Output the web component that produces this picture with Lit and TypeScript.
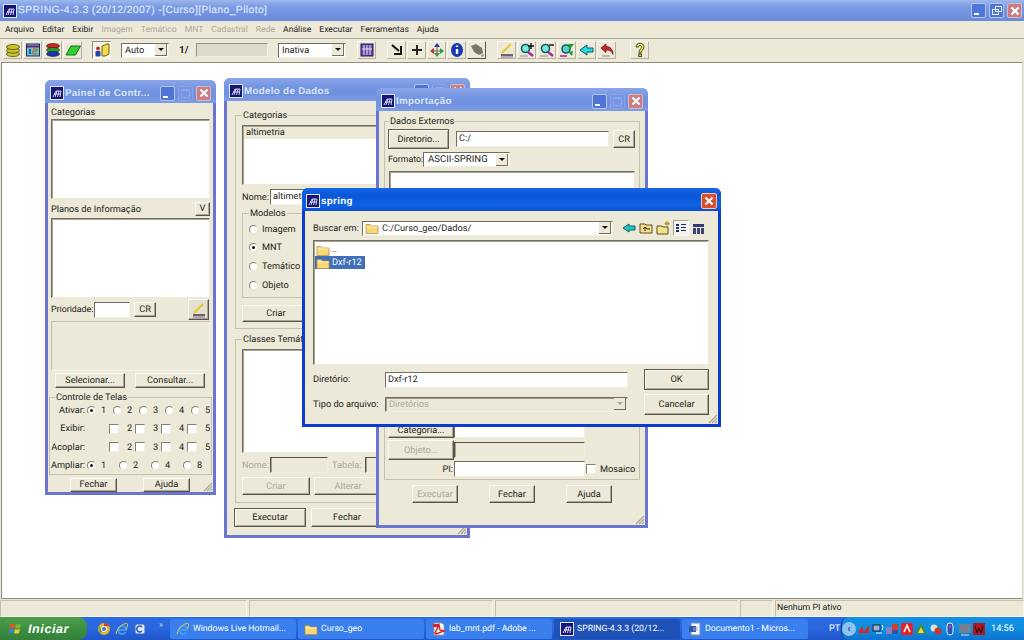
import { LitElement, html, css, svg } from 'lit';
import { customElement } from 'lit/decorators.js';

const ico = (w: number, body: unknown, h = w) =>
  html`<svg class="ico" width=${w} height=${h} viewBox="0 0 ${w} ${h}">${body}</svg>`;

const appIcon = ico(14, svg`
  <rect x=".5" y=".5" width="13" height="13" fill="#14147a" stroke="#dfe6f7"/>
  <path d="M3 11 6 5h5l-1 6M5 11l2-6M7.5 11l1.5-6M4 8h7" stroke="#fff" stroke-width=".8" fill="none"/>`);

const folder = ico(14, svg`
  <path d="M1 3.5h4l1.5 1.5H13v7.5H1z" fill="#f7d777" stroke="#b2933c" stroke-width=".8"/>
  <path d="M1.5 6h11" stroke="#fff3b8"/>`);

const grip = ico(11, svg`<path d="M10 2 2 10M10 5 5 10M10 8 8 10" stroke="#aca899" stroke-width="1.2"/>`);

const pen = ico(16, svg`
  <path d="M3 11 12 2" stroke="#e8c92e" stroke-width="2"/>
  <path d="M2 13h12" stroke="#333" stroke-width="1.4"/><path d="M2 15h12" stroke="#8a5fb0"/>`);

const dropArrow = html`<span class="drop"><i></i></span>`;

const tools1 = [
  svg`<g stroke="#4d4a10" stroke-width=".8" fill="#c9c22c"><ellipse cx="8" cy="12" rx="6.5" ry="2.6"/><ellipse cx="8" cy="8.5" rx="6.5" ry="2.6"/><ellipse cx="8" cy="5" rx="6.5" ry="2.6"/></g>`,
  svg`<rect x="1.5" y="2" width="13" height="12" fill="#68c3c9" stroke="#1a2a6c"/><path d="M2 4.5h12" stroke="#7a1c6a" stroke-width="2"/><path d="M5 7v5" stroke="#173a92" stroke-width="1.5"/><path d="M8 7h4v2H8v3h4" stroke="#c0571a" fill="none"/>`,
  svg`<g stroke="#111" stroke-width=".6"><ellipse cx="8" cy="4" rx="6.5" ry="2.4" fill="#d9261c"/><ellipse cx="8" cy="8" rx="6.5" ry="2.4" fill="#27a02f"/><ellipse cx="8" cy="12" rx="6.5" ry="2.4" fill="#2234b8"/></g>`,
  svg`<path d="M1 13 6 4h9.5l-5 9z" fill="#2fd12f" stroke="#1b6b1b"/>`,
];
const person = svg`<path d="M8 14V4l5-2h2v10l-4 2z" fill="#f2dc4a" stroke="#6e5f10"/><circle cx="4" cy="6.5" r="2" fill="#c4351f"/><rect x="1.5" y="9" width="5" height="5.5" rx="1" fill="#1e46a8"/>`;
const tools2 = [
  svg`<path d="M3 3 10 9M5 12h7V4" stroke="#111" stroke-width="2" fill="none"/>`,
  svg`<path d="M8 3v10M3 8h10" stroke="#222" stroke-width="2"/>`,
  svg`<path d="M8 1 5 5h6z" fill="#2233a8"/><path d="M1 9 5 6v6z" fill="#c8272a"/><path d="M15 9 11 6v6z" fill="#25a33b"/><path d="M8 15 5 11h6z" fill="#25a33b"/><path d="M8 4v8M4 9h8" stroke="#666"/>`,
  svg`<ellipse cx="8" cy="8" rx="6" ry="7" fill="#1639b5"/><path d="M8 3.5v1.5M8 7v5" stroke="#fff" stroke-width="2.4"/>`,
  svg`<path d="M2 4 7 2l6 4 1 5-4 2-5-3z" fill="#77776a"/><path d="M14 12v2h-2" stroke="#777" fill="none"/>`,
];
const tools3 = [
  pen,
  ico(16, svg`<circle cx="6.5" cy="6.5" r="4" fill="#7fe6df" stroke="#0d5d63" stroke-width="1.6"/><path d="M9 10l5 4" stroke="#b0279a" stroke-width="2.4"/><path d="M12 1v6M9 4h6" stroke="#111" stroke-width="1.4"/><path d="M1 14h8" stroke="#888"/>`),
  ico(16, svg`<circle cx="6.5" cy="6.5" r="4" fill="#7fe6df" stroke="#0d5d63" stroke-width="1.6"/><path d="M9 10l5 4" stroke="#b0279a" stroke-width="2.4"/><path d="M10 3h5" stroke="#111" stroke-width="1.4"/><path d="M1 14h8" stroke="#888"/>`),
  ico(16, svg`<circle cx="7" cy="7" r="4" fill="#5fd2c8" stroke="#0d5d63" stroke-width="1.6"/><path d="M9 2h6l-4 5zM9 10l5-1-1 5z" fill="#1e9e32"/><path d="M1 14h7" stroke="#b0279a" stroke-width="1.6"/>`),
  ico(16, svg`<path d="M1 8 8 3v3h6v4H8v3z" fill="#23dbe0" stroke="#0a5b67"/>`),
  ico(16, svg`<path d="M2 6 7 2v2.5c4 0 7 2.5 7 8-1.5-3.5-3.5-4.5-7-4.5v2.5z" fill="#d2242a" stroke="#541012" stroke-width=".7"/><path d="M3 14h8" stroke="#888"/>`),
];
const help = svg`<path d="M4 5c0-5 8-5 8 0 0 3-3 3-3 6H7c0-4 2.5-4 2.5-6S6.5 3 6.5 5z" fill="#f1e63a" stroke="#222" stroke-width=".8"/><rect x="6.8" y="12" width="2.6" height="2.6" fill="#f1e63a" stroke="#222" stroke-width=".8"/>`;

const menus = ['Arquivo', 'Editar', 'Exibir', 'Imagem', 'Temático', 'MNT', 'Cadastral', 'Rede', 'Análise', 'Executar', 'Ferramentas', 'Ajuda'];
const offMenus = ['Imagem', 'Temático', 'MNT', 'Cadastral', 'Rede'];

const tray = [
  svg`<path d="M2 11 6 4l2 6 5-7v8z" fill="#e3231d"/>`,
  svg`<rect x="2" y="3" width="7" height="6" fill="#9cb3d9" stroke="#123"/><path d="M5 11h6M11 3q2 2 0 5" stroke="#dfe" fill="none"/>`,
  svg`<rect x="1" y="5" width="6" height="7" fill="#8a7fc0"/><rect x="7" y="2" width="6" height="6" fill="#c64236"/><rect x="7" y="8" width="6" height="4" fill="#3452a8"/>`,
  svg`<rect x="1" y="1" width="12" height="12" rx="2" fill="#ea2027"/><path d="M4 10 7 3.5 10 10" stroke="#fff" stroke-width="1.6" fill="none"/>`,
  svg`<path d="M7 1 13 12H1z" fill="#3c8d3f"/><path d="M7 5 10 11H4z" fill="#f1d54a"/>`,
  svg`<circle cx="5" cy="6" r="3.5" fill="#dfdfd0"/><circle cx="9" cy="9" r="3.5" fill="#c9352b"/>`,
  svg`<rect x="4" y="1" width="6" height="12" rx="3" fill="#1f56c7" stroke="#e8eef9"/><rect x="6" y="3" width="2" height="3" fill="#e33"/>`,
  svg`<rect x="1" y="2" width="12" height="9" fill="#73808f"/><path d="M3 13h8" stroke="#ddd"/>`,
  svg`<rect x="1" y="1" width="12" height="12" fill="#b3161c"/><path d="M3 4l2 7 2-5 2 5 2-7" stroke="#111" fill="none"/>`,
];

const flag = ico(16, svg`
  <path d="M2 4q2-2 5-1l-1 4q-3-1-5 1z" fill="#e6542c"/><path d="M8 3q2 1 5 0l-1 4q-3 1-5 0z" fill="#7cb83a"/>
  <path d="M1 9q2-2 5-1l-1 4q-3-1-5 1z" fill="#3e7fe0"/><path d="M7 8q2 1 5 0l-1 4q-3 1-5 0z" fill="#f5c92a"/>`);
const ie = ico(14, svg`<path d="M3 8h8c0-3-2-4-4-4S3 6 3 8s2 4 4 4c1.500 0 3-.7 3.500-2" fill="none" stroke="#3f9cf0" stroke-width="1.800"/><path d="M1 12C2 6 8 1 12 1.500 13.500 3 12 6 11 7" fill="none" stroke="#e8c34a"/>`);
const quick = [
  ico(14, svg`<circle cx="7" cy="7" r="6" fill="#e2b32a"/><path d="M7 1a6 6 0 0 1 5.200 3H7z" fill="#d6392c"/><path d="M1.800 4 5 9 3 12" fill="#3e9d48"/><circle cx="7" cy="7" r="2.600" fill="#3b78e0" stroke="#fff"/>`),
  ie,
  ico(14, svg`<rect x="2" y="2" width="10" height="10" rx="2" fill="#dfe7f6" stroke="#3d65b4"/><path d="M9 5a3 3 0 1 0 0 4" stroke="#2e5fc0" stroke-width="1.500" fill="none"/>`),
];
const pdf = ico(14, svg`<path d="M2 1h8l2 2v10H2z" fill="#fff" stroke="#999"/><path d="M3 11 7 3l1 5 4 1-8 3z" fill="none" stroke="#d8221f" stroke-width="1.500"/><rect x="1" y="2" width="6" height="3" fill="#d8221f"/>`);
const word = ico(14, svg`<path d="M3 1h9v12H3z" fill="#f2f5fb" stroke="#7c8fb8"/><rect x="1" y="4" width="7" height="6" fill="#2f57ad"/><path d="M5 6h5M5 8h5" stroke="#9ab"/>`);

@customElement('app-root')
export class AppRoot extends LitElement {
  static styles = css`
    :host {
      display: flex;
      flex-direction: column;
      position: relative;
      width: 1024px;
      height: 640px;
      overflow: hidden;
      background: #ece9d8;
      color: #23231a;
      font: 9.2px Roboto, 'Liberation Sans', Arial, sans-serif;
      text-rendering: geometricPrecision;
    }
    .ico { display: block; flex: none; }
    .off { color: #aca899; }

    /* caption bars */
    .cap {
      display: flex;
      align-items: center;
      flex: none;
      box-sizing: border-box;
      padding: 0 3px 0 3px;
      gap: 1px;
      height: 23px;
      color: #d9e5f8;
      font: bold 9.8px 'Liberation Sans', Arial, sans-serif;
      letter-spacing: 0.3px;
      background: linear-gradient(#8aa6e8 0, #7495e2 40%, #6f90df 70%, #7d9de4 100%);
    }
    .cap.main {
      height: 21px;
      padding: 0 2px 0 3px;
      background: linear-gradient(#9db8ec 0, #7c9ce4 30%, #7091e0 70%, #6c8ad6 100%);
    }
    .cap.main .tx { font-size: 10.300px; letter-spacing: 0.4px; font-weight: normal; -webkit-text-stroke: 0.2px #d9e5f8; }
    .cap.active {
      color: #fff;
      background: linear-gradient(#1767e6 0, #0a57d8 30%, #0f62e2 75%, #0b4fcf 100%);
    }
    .cap .tx { flex: 1; white-space: nowrap; }
    .wb { display: flex; gap: 3px; }
    .wb i {
      display: block;
      position: relative;
      width: 15px;
      height: 15px;
      border-radius: 2px;
      border: 1px solid #b6c7ee;
      background: #4e75d8;
      box-sizing: border-box;
    }
    .wb i.mn::after { content: ''; position: absolute; left: 2px; bottom: 2px; width: 5px; height: 2px; background: #fff; }
    .wb i.mx { background: #7795e0; border-color: #8ba5e6; }
    .wb i.mx::after { content: ''; position: absolute; inset: 2px; border: 1px solid #8ca7e8; border-top-width: 2px; }
    .wb i.rs::after { content: ''; position: absolute; left: 2px; top: 5px; width: 5px; height: 4px; border: 1px solid #e8eefb; }
    .wb i.rs::before { content: ''; position: absolute; left: 5px; top: 2px; width: 5px; height: 4px; border: 1px solid #e8eefb; }
    .wb i.cl { background: #c97d84; border-color: #d9b8c4; }
    .cap.active .wb i.cl { background: #d9502f; border-color: #f2c5b5; width: 16px; height: 16px; margin-right: -1px; }
    .wb i.cl::before, .wb i.cl::after {
      content: '';
      position: absolute;
      left: 1.500px;
      top: 5.500px;
      width: 10px;
      height: 2px;
      background: #fff;
      transform: rotate(45deg);
    }
    .wb i.cl::after { transform: rotate(-45deg); }

    /* main window bars */
    .menu {
      display: flex;
      flex: none;
      align-items: center;
      gap: 8px;
      height: 17px;
      padding-left: 5px;
      font-size: 8.600px;
      border-bottom: 1px solid #aca899;
    }
    .toolbar {
      display: flex;
      flex: none;
      align-items: center;
      height: 22px;
      padding-left: 3px;
    }
    .tool {
      display: flex;
      flex: none;
      align-items: center;
      justify-content: center;
      width: 19px;
      height: 18px;
      margin-right: 1px;
      border: 1px solid;
      border-color: #f8f7f0 #b5b2a2 #b5b2a2 #f8f7f0;
      box-sizing: border-box;
    }
    .tool.on { background: #f6f5ee; border-color: #8f8c7c #f8f7f0 #f8f7f0 #8f8c7c; }
    .tool.on2 { border-color: #f8f7f0 #55534a #55534a #f8f7f0; }
    .t-sep { width: 10px; flex: none; }
    .t-sep.a { width: 9px; }
    .t-sep.c { width: 11px; }
    .t-sep.d { width: 13px; }
    .sel {
      display: flex;
      align-items: center;
      flex: none;
      box-sizing: border-box;
      height: 15px;
      padding-left: 3px;
      background: #fff;
      border: 1px solid;
      border-color: #716f64 #f1efe2 #f1efe2 #716f64;
      justify-content: space-between;
    }
    .sel.auto { width: 48px; }
    .sel.inat { width: 68px; }
    .sel.fmt { width: 87px; padding-left: 4px; font-size: 9.600px; }
    .sel.path { width: 251px; padding-left: 2px; gap: 3px; }
    .sel.path .t { flex: 1; }
    .sel.tipo { width: 243px; background: #ece9d8; color: #aca899; padding-left: 3px; box-shadow: inset 1px 1px 0 #9b9888; }
    .drop {
      display: flex;
      align-items: center;
      justify-content: center;
      width: 12px;
      height: 12px;
      margin-right: 1px;
      background: #ece9d8;
      border-right: 1px solid #716f64;
      border-bottom: 1px solid #716f64;
      box-sizing: border-box;
    }
    .drop i { width: 0; height: 0; border: 3px solid transparent; border-top: 3px solid #111; border-bottom: 0; }
    .tipo .drop i { border-top-color: #aca899; }
    .scale { margin: 0 7px 0 10px; font-weight: bold; font-size: 10px; width: 10px; flex: none; }
    .scale-f { width: 72px; height: 14px; flex: none; background: #dcdacb; border: 1px solid; border-color: #95937f #f1efe2 #f1efe2 #95937f; box-sizing: border-box; margin-right: 10px; }
    .auto-gap { width: 9px; flex: none; }

    /* canvas and status */
    .canvas {
      flex: 1;
      margin: 1px;
      background: #fff;
      border: 1px solid;
      border-color: #8f8c7c #d8d5c6 #8f8c7c #8f8c7c;
    }
    .status { display: flex; flex: none; height: 17px; gap: 2px; }
    .status div {
      border: 1px solid;
      border-color: #c3c0b0 #f5f3ea #f5f3ea #c3c0b0;
      padding-left: 1px;
      line-height: 15px;
      box-sizing: border-box;
    }
    .status .s1 { width: 247px; }
    .status .s2 { width: 244px; }
    .status .s3 { width: 243px; }
    .status .s4 { width: 33px; }
    .status .s5 { flex: 1; font-size: 8.800px; }

    /* taskbar */
    .taskbar {
      display: flex;
      flex: none;
      align-items: center;
      height: 23px;
      color: #fff;
      background: linear-gradient(#2c6be2 0, #2a67e0 50%, #1f55c8 100%);
    }
    .start {
      display: flex;
      align-items: center;
      gap: 4px;
      flex: none;
      box-sizing: border-box;
      width: 87px;
      height: 23px;
      padding-left: 8px;
      border-radius: 0 9px 9px 0;
      background: linear-gradient(#4d9f4d 0, #3c8f3e 50%, #33803a 100%);
      font: italic bold 12.500px 'Liberation Sans', Arial, sans-serif;
      letter-spacing: 0.6px;
    }
    .quick { display: flex; align-items: center; gap: 4px; padding-left: 10px; width: 83px; flex: none; box-sizing: border-box; }
    .quick .more { font-size: 8px; color: #cfe0fa; margin: -8px 0 0 8px; }
    .tasks { display: flex; gap: 2px; flex: none; font-size: 8.700px; }
    .task {
      display: flex;
      align-items: center;
      gap: 3px;
      box-sizing: border-box;
      width: 126px;
      height: 20px;
      padding-left: 6px;
      background: #3a7fee;
      border-radius: 2px;
      white-space: nowrap;
      overflow: hidden;
    }
    .task.cur { background: #1e52b7; }
    .lang { margin-left: 21px; width: 12px; flex: none; }
    .tray {
      display: flex;
      align-items: center;
      flex: 1;
      height: 23px;
      background: linear-gradient(#1590e2, #0f8ee0 50%, #0e72cf);
      border-left: 1px solid #0a3f9f;
      border-radius: 8px 0 0 8px;
    }
    .tray .arrow { width: 14px; height: 14px; border-radius: 50%; background: #8fc3f2; color: #1c49a8; text-align: center; line-height: 13px; font-weight: bold; font-size: 11px; flex: none; }
    .tray .icons { display: flex; gap: 0.500px; }
    .tray .clock { margin-left: 5px; }

    /* windows on the desktop */
    .win {
      position: absolute;
      display: flex;
      flex-direction: column;
      box-sizing: border-box;
      border: 3px solid #6c75ce;
      border-top: 0;
      border-radius: 6px 6px 0 0;
      background: #ece9d8;
    }
    .win > .cap { margin: 0 -3px; border-radius: 6px 6px 0 0; padding: 3px 5px 0 5px; }
    .win > .cap.active { padding-left: 4px; }
    .win .grip { position: absolute; right: 0; bottom: 0; }
    .w-painel { left: 45px; top: 80px; width: 171px; height: 415px; }
    .w-modelo { left: 224px; top: 78px; width: 246px; height: 460px; }
    .w-import { left: 376px; top: 88px; width: 272px; height: 440px; }
    .w-spring { left: 302px; top: 188px; width: 419px; height: 239px; border-color: #0b3bd2; }

    .row { display: flex; align-items: center; flex: none; }
    .field {
      box-sizing: border-box;
      flex: none;
      height: 16px;
      padding-left: 2px;
      line-height: 14px;
      background: #fff;
      border: 1px solid;
      border-color: #716f64 #f1efe2 #f1efe2 #716f64;
      white-space: nowrap;
      overflow: hidden;
    }
    .field.dis { background: #ece9d8; box-shadow: inset 1px 0 0 #a6a394; border-color: #55534a #f1efe2 #f1efe2 #55534a; }
    .list {
      box-sizing: border-box;
      flex: none;
      background: #fff;
      border: 1px solid;
      border-color: #716f64 #ece9d8 #ece9d8 #716f64;
      box-shadow: inset 1px 1px 0 #a6a394;
    }
    .btn {
      display: flex;
      align-items: center;
      justify-content: center;
      box-sizing: border-box;
      flex: none;
      height: 15px;
      background: #ece9d8;
      border: 1px solid;
      border-color: #fbfaf4 #55534a #55534a #fbfaf4;
      box-shadow: inset -1px -1px 0 #aca899;
    }
    .btn.def { border-color: #5f5d50; box-shadow: inset 1px 1px 0 #fbfaf4, inset -1px -1px 0 #aca899; }
    fieldset {
      margin: 0;
      min-width: 0;
      box-sizing: border-box;
      border: 1px solid #c4c1b1;
      flex: none;
    }
    legend { padding: 0 1px; line-height: 11px; }

    /* painel de controle */
    .p-body { display: flex; flex-direction: column; flex: 1; padding: 0 3px; }
    .p-cap { height: 16px; box-sizing: border-box; padding-top: 2px; }
    .p-list { width: 159px; height: 80px; }
    .p-planos { height: 19px; justify-content: space-between; }
    .p-planos .tl { padding-top: 2px; }
    .p-v { width: 15px; height: 14px; }
    .p-pri { height: 23px; }
    .p-pril { width: 43px; flex: none; font-size: 8.800px; }
    .p-prio { width: 36px; margin-right: 4px; }
    .p-cr { width: 22px; }
    .p-pen { width: 21px; height: 21px; margin-left: 32px; background: #e4e1d0; }
    .p-box { height: 50px; width: 159px; box-sizing: border-box; border: 1px solid; border-color: #c3c0b0 #f5f3ea #f5f3ea #c3c0b0; }
    .p-acts { gap: 10px; margin: 2px 0 0 4px; }
    .p-act { width: 70px; }
    .p-tel { margin: 4px -2px 0; padding: 0 0 1px 0; }
    .p-tel legend { margin-left: 5px; }
    .t-row { display: grid; grid-template-columns: 35px repeat(5, 26px); height: 14px; align-items: center; margin-bottom: 4.500px; }
    .t-row.z { grid-template-columns: 35px repeat(4, 32px); margin-bottom: 0; }
    .t-row > span:first-child { text-align: right; }
    .cell { display: flex; align-items: center; gap: 5px; padding-left: 2px; }
    .radio {
      display: block;
      position: relative;
      flex: none;
      box-sizing: border-box;
      width: 9px;
      height: 9px;
      border-radius: 50%;
      background: #fff;
      border: 1px solid;
      border-color: #85836f #e9e6d6 #e9e6d6 #85836f;
    }
    .radio.on::after { content: ''; position: absolute; left: 2px; top: 2px; width: 3px; height: 3px; border-radius: 50%; background: #111; }
    .check {
      display: block;
      flex: none;
      box-sizing: border-box;
      width: 10px;
      height: 10px;
      background: #fff;
      border: 1px solid;
      border-color: #85836f #f1efe2 #f1efe2 #85836f;
    }
    .cell .check { margin: 0 3px 0 -4px; }
    .p-foot { gap: 26px; margin: 3px 0 0 19px; }
    .p-f { width: 47px; height: 14px; }

    /* modelo de dados */
    .m-body { display: flex; flex-direction: column; padding: 9px 5px 0 8px; flex: 1; }
    .m-f1 { padding: 0 6px 6px; }
    .m-list { width: 213px; height: 60px; margin-top: 4px; padding: 1px; }
    .m-sel { display: block; padding-left: 2px; line-height: 12px; background: #ece9d8; }
    .m-nome { margin-top: 4px; height: 16px; }
    .m-lbl { width: 28px; flex: none; }
    .m-nome .field { width: 186px; }
    .m-mod { margin-top: 3px; height: 90px; width: 150px; padding: 0 0 0 6px; }
    .m-r { gap: 4px; height: 14px; margin-bottom: 4.700px; }
    .m-r:first-of-type { margin-top: 3px; }
    .m-criar { width: 68px; height: 17px; margin-top: 7px; }
    .m-f2 { margin-top: 5px; padding: 0 6px 7px; }
    .m-list2 { width: 213px; height: 104px; margin-top: 4px; }
    .m-cn { margin-top: 4px; height: 16px; }
    .m-cn .a { width: 58px; margin-right: 4px; }
    .m-cn .t { width: 33px; flex: none; }
    .m-cn .b { width: 60px; }
    .m-cb { gap: 4px; margin-top: 4px; }
    .m-b1 { width: 68px; height: 18px; }
    .m-foot { gap: 5px; margin: 5px 0 0 -1px; }
    .m-fb { width: 72px; height: 19px; }

    /* importacao */
    .i-body { display: flex; flex-direction: column; flex: 1; padding: 5px 5px 0 5px; }
    .i-f { padding: 0 3px 2px; }
    .i-f legend { margin-left: 1px; }
    .i-r1 { height: 20px; margin-top: 2px; }
    .i-dir { width: 61px; height: 20px; margin-right: 7px; }
    .i-path { width: 153px; margin-right: 4px; }
    .i-cr { width: 22px; height: 18px; }
    .i-r2 { height: 15px; margin-top: 3px; }
    .i-fl { width: 35px; flex: none; font-size: 8.800px; }
    .i-list { width: 246px; height: 248px; margin: 4px 0 0 1px; }
    .i-grid { display: grid; grid-template-columns: 66px 131px auto; align-items: center; margin-top: 3px; }
    .i-grid .b1 { width: 66px; height: 16px; }
    .i-grid .b2 { width: 66px; height: 20px; margin-top: 2px; }
    .i-grid .c { height: 15px; }
    .i-grid .d { margin-top: 2px; }
    .i-grid .pl { text-align: right; padding-right: 1px; margin-top: 1px; }
    .i-grid .e { margin-top: 1px; }
    .i-mos { display: flex; gap: 4px; align-items: center; margin-top: 1px; padding-left: 1px; }
    .i-foot { gap: 31px; margin: 5px 0 0 28px; }
    .i-fb { width: 46px; height: 18px; }

    /* spring */
    .s-body { display: flex; flex-direction: column; flex: 1; padding: 9px 9px 0 8px; }
    .s-top { height: 16px; }
    .s-lbl { width: 49px; flex: none; }
    .s-tools { display: flex; align-items: center; margin-left: 9px; gap: 3px; }
    .s-view { background: #f5f4ec; border: 1px solid; border-color: #a9a695 #fff #fff #a9a695; padding: 1px; }
    .s-list { width: 396px; height: 125px; margin-top: 4px; padding: 2px 1px; }
    .s-item { display: flex; align-items: center; gap: 2px; width: 50px; height: 13px; padding-left: 1px; box-sizing: border-box; }
    .s-item.sel-item { background: #3e6fb8; color: #fff; }
    .s-bot { display: grid; grid-template-columns: 72px 243px 1fr; grid-template-rows: 21px 20px; row-gap: 4px; align-items: center; margin-top: 4px; width: 396px; }
    .s-bot .btn { justify-self: end; width: 65px; height: 21px; }
    .s-bot .field { width: 243px; }
  `;

  private caption(title: string, kind = '', restore = false, close = true) {
    return html`<div class="cap ${kind}">
      ${appIcon}<span class="tx">${title}</span>
      ${close
        ? html`<span class="wb"><i class="mn"></i><i class=${restore ? 'rs' : 'mx'}></i><i class="cl"></i></span>`
        : html`<span class="wb"><i class="cl"></i></span>`}
    </div>`;
  }

  private cells(kind: 'radio' | 'check', nums: number[], first = '') {
    return nums.map(
      (n, i) => html`<span class="cell">
        <span class="${kind} ${i === 0 && first ? first : ''}"></span>${n}
      </span>`,
    );
  }

  private painel() {
    return html`<section class="win w-painel">
      ${this.caption('Painel de Contr...')}
      <div class="p-body">
        <div class="row p-cap">Categorias</div>
        <div class="list p-list"></div>
        <div class="row p-planos"><span class="tl">Planos de Informação</span><span class="btn p-v">V</span></div>
        <div class="list p-list"></div>
        <div class="row p-pri">
          <span class="p-pril">Prioridade:</span><span class="field p-prio"></span><span class="btn p-cr">CR</span>
          <span class="btn p-pen">${pen}</span>
        </div>
        <div class="p-box"></div>
        <div class="row p-acts">
          <span class="btn p-act">Selecionar...</span><span class="btn p-act">Consultar...</span>
        </div>
        <fieldset class="p-tel">
          <legend>Controle de Telas</legend>
          <div class="t-row"><span>Ativar:</span>${this.cells('radio', [1, 2, 3, 4, 5], 'on')}</div>
          <div class="t-row"><span>Exibir:</span><span></span>${this.cells('check', [2, 3, 4, 5])}</div>
          <div class="t-row"><span>Acoplar:</span><span></span>${this.cells('check', [2, 3, 4, 5])}</div>
          <div class="t-row z"><span>Ampliar:</span>${this.cells('radio', [1, 2, 4, 8], 'on')}</div>
        </fieldset>
        <div class="row p-foot"><span class="btn p-f">Fechar</span><span class="btn p-f">Ajuda</span></div>
      </div>
      <span class="grip">${grip}</span>
    </section>`;
  }

  private modelo() {
    const modelos = ['Imagem', 'MNT', 'Temático', 'Objeto'];
    return html`<section class="win w-modelo">
      ${this.caption('Modelo de Dados')}
      <div class="m-body">
        <fieldset class="m-f1">
          <legend>Categorias</legend>
          <div class="list m-list"><span class="m-sel">altimetria</span></div>
          <div class="row m-nome"><span class="m-lbl">Nome:</span><span class="field">altimetria</span></div>
          <fieldset class="m-mod">
            <legend>Modelos</legend>
            ${modelos.map(
              (m) => html`<div class="row m-r"><span class="radio ${m === 'MNT' ? 'on' : ''}"></span>${m}</div>`,
            )}
          </fieldset>
          <span class="btn m-criar">Criar</span>
        </fieldset>
        <fieldset class="m-f2">
          <legend>Classes Temáticas</legend>
          <div class="list m-list2"></div>
          <div class="row m-cn off">
            <span class="m-lbl">Nome:</span><span class="field dis a"></span><span class="t">Tabela:</span><span class="field dis b"></span>
          </div>
          <div class="row m-cb off">
            <span class="btn m-b1">Criar</span><span class="btn m-b1">Alterar</span>
          </div>
        </fieldset>
        <div class="row m-foot">
          <span class="btn def m-fb">Executar</span><span class="btn m-fb">Fechar</span><span class="btn m-fb">Ajuda</span>
        </div>
      </div>
      <span class="grip">${grip}</span>
    </section>`;
  }

  private importacao() {
    return html`<section class="win w-import">
      ${this.caption('Importação')}
      <div class="i-body">
        <fieldset class="i-f">
          <legend>Dados Externos</legend>
          <div class="row i-r1">
            <span class="btn def i-dir">Diretorio...</span>
            <span class="field i-path">C:/</span>
            <span class="btn i-cr">CR</span>
          </div>
          <div class="row i-r2"><span class="i-fl">Formato:</span><span class="sel fmt">ASCII-SPRING${dropArrow}</span></div>
          <div class="list i-list"></div>
          <div class="i-grid">
            <span class="btn b1">Categoria...</span><span class="field c"></span><span></span>
            <span class="btn b2 off">Objeto...</span><span class="field dis d"></span><span></span>
            <span class="pl">PI:</span><span class="field e"></span>
            <span class="i-mos"><span class="check"></span>Mosaico</span>
          </div>
        </fieldset>
        <div class="row i-foot">
          <span class="btn i-fb off">Executar</span><span class="btn i-fb">Fechar</span><span class="btn i-fb">Ajuda</span>
        </div>
      </div>
      <span class="grip">${grip}</span>
    </section>`;
  }

  private spring() {
    return html`<section class="win w-spring">
      ${this.caption('spring', 'active', false, false)}
      <div class="s-body">
        <div class="row s-top">
          <span class="s-lbl">Buscar em:</span>
          <span class="sel path">${folder}<span class="t">C:/Curso_geo/Dados/</span>${dropArrow}</span>
          <span class="s-tools">
            ${ico(14, svg`<path d="M1 7 7 3v2h6v4H7v2z" fill="#20c8c4" stroke="#0b5d63"/>`)}
            ${ico(14, svg`<path d="M1 3h5l1 1h6v8H1z" fill="#f4e08a" stroke="#5e5220"/><path d="M6 10V6M4 8l2-2 2 2h3" stroke="#222" fill="none"/>`)}
            ${ico(14, svg`<path d="M1 5h5l1 1h5v7H1z" fill="#f4e08a" stroke="#5e5220"/><path d="M11 0v5M8.500 2.500h5M9 1l4 3M13 1 9 4" stroke="#b69d14"/>`)}
            <span class="s-view">${ico(12, svg`<path d="M1 2h3v2H1zM1 5h3v2H1zM1 8h3v2H1zM6 2h5v1H6zM6 5h5v1H6zM6 8h5v1H6z" fill="#1b2a74"/>`)}</span>
            ${ico(13, svg`<path d="M1 2h11v3H1z" fill="#2e3a70"/><path d="M1 6h3v6H1zM5 6h3v6H5zM9 6h3v6H9z" fill="#3b4570"/>`)}
          </span>
        </div>
        <div class="list s-list">
          <div class="s-item">${folder}..</div>
          <div class="s-item sel-item">${folder}Dxf-r12</div>
        </div>
        <div class="s-bot">
          <span>Diretório:</span>
          <span class="field">Dxf-r12</span>
          <span class="btn def">OK</span>
          <span>Tipo do arquivo:</span>
          <span class="sel tipo">Diretórios${dropArrow}</span>
          <span class="btn">Cancelar</span>
        </div>
      </div>
      <span class="grip">${grip}</span>
    </section>`;
  }

  render() {
    return html`
      ${this.caption('SPRING-4.3.3 (20/12/2007) -[Curso][Plano_Piloto]', 'main', true)}
      <nav class="menu">
        ${menus.map((m) => html`<span class=${offMenus.includes(m) ? 'off' : ''}>${m}</span>`)}
      </nav>
      <div class="toolbar">
        ${tools1.map((t) => html`<span class="tool">${ico(16, t)}</span>`)}
        <span class="t-sep a"></span>
        <span class="tool on">${ico(16, person)}</span>
        <span class="auto-gap"></span>
        <span class="sel auto">Auto${dropArrow}</span>
        <span class="scale">1/</span>
        <span class="scale-f"></span>
        <span class="sel inat">Inativa${dropArrow}</span>
        <span class="t-sep c"></span>
        <span class="tool">${ico(14, svg`<rect x="1" y="1" width="12" height="12" fill="#6c4aa6" stroke="#24124e"/><path d="M4 2v10M7 2v10M10 2v10M2 6h10" stroke="#e8e2f4"/>`)}</span>
        <span class="t-sep"></span>
        ${tools2.map((t, i) => html`<span class="tool ${i === 4 ? 'on2' : ''}">${ico(16, t)}</span>`)}
        <span class="t-sep"></span>
        ${tools3.map((t) => html`<span class="tool">${t}</span>`)}
        <span class="t-sep d"></span>
        <span class="tool">${ico(16, help)}</span>
      </div>
      <main class="canvas"></main>
      ${this.painel()} ${this.modelo()} ${this.importacao()} ${this.spring()}
      <div class="status">
        <div class="s1"></div><div class="s2"></div><div class="s3"></div><div class="s4"></div>
        <div class="s5">Nenhum PI ativo</div>
      </div>
      <footer class="taskbar">
        <div class="start">${flag}Iniciar</div>
        <div class="quick">${quick}<span class="more">»</span></div>
        <div class="tasks">
          <div class="task">${ie}Windows Live Hotmail...</div>
          <div class="task">${folder}Curso_geo</div>
          <div class="task">${pdf}lab_mnt.pdf - Adobe ...</div>
          <div class="task cur">${appIcon}SPRING-4.3.3 (20/12...</div>
          <div class="task">${word}Documento1 - Micros...</div>
        </div>
        <span class="lang">PT</span>
        <div class="tray">
          <span class="arrow">‹</span>
          <span class="icons">${tray.map((t) => ico(14, t))}</span>
          <span class="clock">14:56</span>
        </div>
      </footer>
    `;
  }
}
